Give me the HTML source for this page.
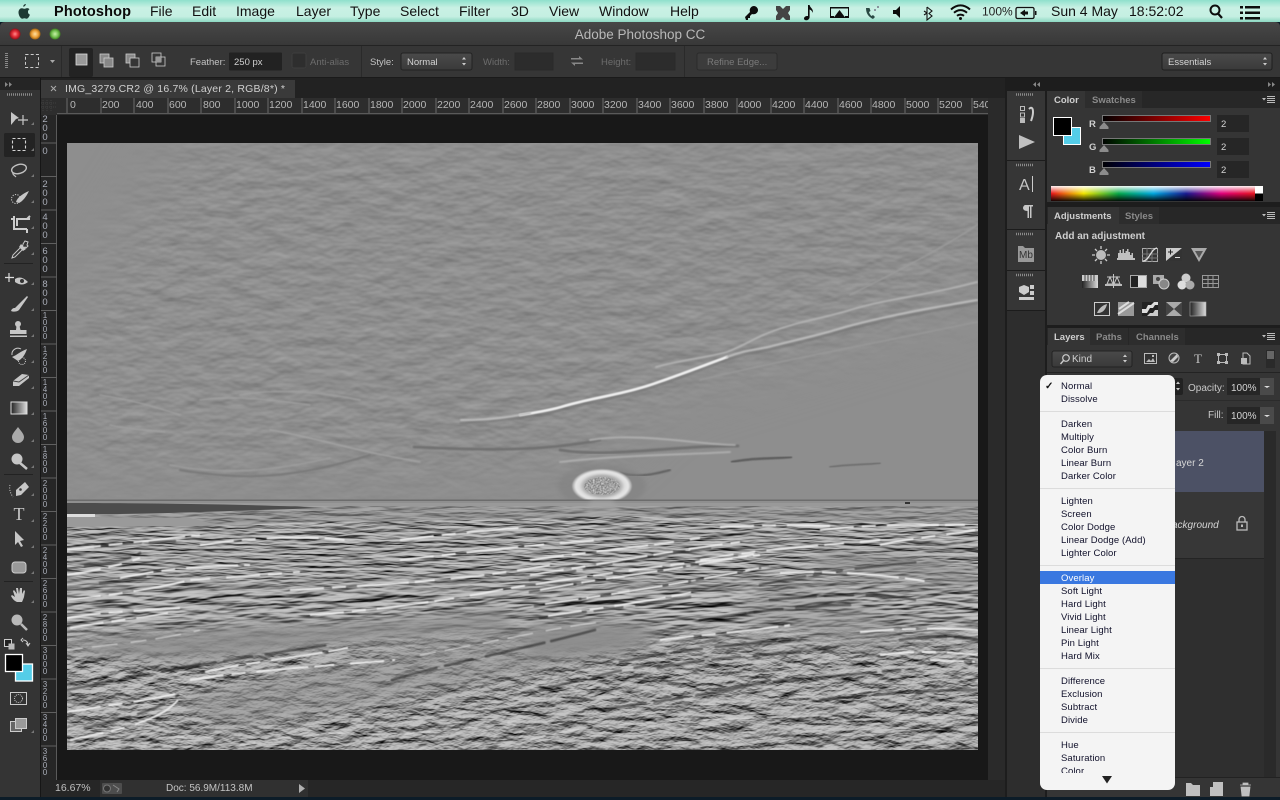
<!DOCTYPE html>
<html><head><meta charset="utf-8"><title>Adobe Photoshop CC</title>
<style>
html,body{margin:0;padding:0;width:1280px;height:800px;overflow:hidden;background:#0b1a24}
svg{display:block;position:absolute;left:0;top:0}
text{font-family:"Liberation Sans",sans-serif}
.m{font-size:14px;fill:#111}
.o{font-size:9.5px;fill:#c4c4c4}
.od{font-size:9.5px;fill:#6c6c6c}
.rt{font-size:10.5px;fill:#b6b6b6}
.rv{font-size:9.5px;fill:#a9adb8;text-anchor:middle}
.rs{font-size:8px}
.t{font-size:9.5px;font-weight:bold;fill:#cfcfcf}
.ti{font-size:9.5px;font-weight:bold;fill:#8a8a8a}
.i{font-size:9.5px;fill:#10102a;letter-spacing:.1px}
</style></head><body>
<svg width="1280" height="800" viewBox="0 0 1280 800" xmlns="http://www.w3.org/2000/svg">
<defs>
<linearGradient id="menu" x1="0" y1="0" x2="0" y2="1"><stop offset="0" stop-color="#8fe0cc"/><stop offset=".35" stop-color="#c9f1e4"/><stop offset=".75" stop-color="#c5efe2"/><stop offset="1" stop-color="#8cd8c2"/></linearGradient>
<linearGradient id="title" x1="0" y1="0" x2="0" y2="1"><stop offset="0" stop-color="#474747"/><stop offset="1" stop-color="#383838"/></linearGradient>
<linearGradient id="rs" x1="0" x2="1"><stop offset="0" stop-color="#020000"/><stop offset="1" stop-color="#ff0000"/></linearGradient>
<linearGradient id="gs" x1="0" x2="1"><stop offset="0" stop-color="#000200"/><stop offset="1" stop-color="#00ff00"/></linearGradient>
<linearGradient id="bs" x1="0" x2="1"><stop offset="0" stop-color="#000002"/><stop offset="1" stop-color="#0000ff"/></linearGradient>
<linearGradient id="hue" x1="0" x2="1"><stop offset="0" stop-color="#e8141c"/><stop offset=".16" stop-color="#f3e600"/><stop offset=".33" stop-color="#06a84a"/><stop offset=".5" stop-color="#00a8e0"/><stop offset=".66" stop-color="#1a1a90"/><stop offset=".83" stop-color="#e0007c"/><stop offset="1" stop-color="#e8141c"/></linearGradient>
<linearGradient id="shade" x1="0" y1="0" x2="0" y2="1"><stop offset="0" stop-color="#fff" stop-opacity=".95"/><stop offset=".5" stop-color="#fff" stop-opacity="0"/><stop offset=".5" stop-color="#000" stop-opacity="0"/><stop offset="1" stop-color="#000" stop-opacity=".9"/></linearGradient>
<linearGradient id="ggrad" x1="0" x2="1"><stop offset="0" stop-color="#222"/><stop offset="1" stop-color="#ddd"/></linearGradient>
<linearGradient id="btn" x1="0" y1="0" x2="0" y2="1"><stop offset="0" stop-color="#4a4a4a"/><stop offset="1" stop-color="#3a3a3a"/></linearGradient>
<radialGradient id="red"><stop offset="0" stop-color="#ff8a8a"/><stop offset=".5" stop-color="#e5303a"/><stop offset="1" stop-color="#8a1018"/></radialGradient>
<radialGradient id="yel"><stop offset="0" stop-color="#ffe0a0"/><stop offset=".6" stop-color="#eda13a"/><stop offset="1" stop-color="#9a6010"/></radialGradient>
<radialGradient id="grn"><stop offset="0" stop-color="#c8f0a8"/><stop offset=".6" stop-color="#74c052"/><stop offset="1" stop-color="#3a7a20"/></radialGradient>
<radialGradient id="sun"><stop offset="0" stop-color="#a6a6a6"/><stop offset=".6" stop-color="#acacac"/><stop offset=".76" stop-color="#dedede"/><stop offset=".88" stop-color="#e6e6e6"/><stop offset="1" stop-color="#9a9a9a"/></radialGradient>
<filter id="sky" x="0" y="0" width="1" height="1" color-interpolation-filters="sRGB"><feTurbulence type="fractalNoise" baseFrequency="0.035 0.07" numOctaves="3" seed="7"/><feDiffuseLighting surfaceScale="0.800" diffuseConstant="0.68" lighting-color="#fff"><feDistantLight azimuth="90" elevation="55"/></feDiffuseLighting></filter>
<filter id="spk" x="0" y="0" width="1" height="1" color-interpolation-filters="sRGB"><feTurbulence type="fractalNoise" baseFrequency="0.6" numOctaves="1" seed="4"/><feColorMatrix values="0 0 0 1.100 .05 0 0 0 1.100 .05 0 0 0 1.100 .05 0 0 0 0 1"/></filter>
<filter id="rockA" x="0" y="0" width="1" height="1" color-interpolation-filters="sRGB"><feTurbulence type="fractalNoise" baseFrequency="0.03 0.2" numOctaves="3" seed="11"/><feDiffuseLighting surfaceScale="2" diffuseConstant="0.72" lighting-color="#fff"><feDistantLight azimuth="90" elevation="55"/></feDiffuseLighting><feComponentTransfer><feFuncR type="linear" slope="1.3" intercept="-.17"/><feFuncG type="linear" slope="1.3" intercept="-.17"/><feFuncB type="linear" slope="1.3" intercept="-.17"/></feComponentTransfer></filter>
<filter id="rockB" x="0" y="0" width="1" height="1" color-interpolation-filters="sRGB"><feTurbulence type="fractalNoise" baseFrequency="0.025 0.13" numOctaves="3" seed="23"/><feDiffuseLighting surfaceScale="3" diffuseConstant="0.72" lighting-color="#fff"><feDistantLight azimuth="90" elevation="55"/></feDiffuseLighting><feComponentTransfer><feFuncR type="linear" slope="1.3" intercept="-.16"/><feFuncG type="linear" slope="1.3" intercept="-.16"/><feFuncB type="linear" slope="1.3" intercept="-.16"/></feComponentTransfer></filter>
<filter id="rockC" x="0" y="0" width="1" height="1" color-interpolation-filters="sRGB"><feTurbulence type="fractalNoise" baseFrequency="0.04 0.1" numOctaves="4" seed="31"/><feDiffuseLighting surfaceScale="3" diffuseConstant="0.72" lighting-color="#fff"><feDistantLight azimuth="80" elevation="55"/></feDiffuseLighting><feComponentTransfer><feFuncR type="linear" slope="1.3" intercept="-.16"/><feFuncG type="linear" slope="1.3" intercept="-.16"/><feFuncB type="linear" slope="1.3" intercept="-.16"/></feComponentTransfer></filter>
<filter id="b06"><feGaussianBlur stdDeviation=".5"/></filter>
<filter id="b1"><feGaussianBlur stdDeviation=".8"/></filter>
<filter id="b2"><feGaussianBlur stdDeviation="2.200"/></filter>
<filter id="b3" x="-10%" y="-30%" width="120%" height="160%"><feGaussianBlur stdDeviation="7"/></filter>
<filter id="b30" x="-20%" y="-20%" width="140%" height="140%"><feGaussianBlur stdDeviation="30"/></filter>
<mask id="skymask" maskUnits="userSpaceOnUse" x="67" y="143" width="911" height="360"><polygon points="190,130 990,130 990,295 660,395 600,455 400,480 60,470 60,330" fill="#fff" filter="url(#b30)"/></mask>
<linearGradient id="fA" x1="0" y1="0" x2="0" y2="1"><stop offset="0" stop-color="#fff"/><stop offset=".75" stop-color="#fff"/><stop offset="1" stop-color="#000"/></linearGradient>
<linearGradient id="fC" x1="0" y1="0" x2="0" y2="1"><stop offset="0" stop-color="#000"/><stop offset=".3" stop-color="#fff"/></linearGradient>
<mask id="mA" maskUnits="userSpaceOnUse" x="67" y="515" width="911" height="80"><rect x="67" y="515" width="911" height="80" fill="url(#fA)"/></mask>
<mask id="mC" maskUnits="userSpaceOnUse" x="67" y="620" width="911" height="130"><rect x="67" y="620" width="911" height="130" fill="url(#fC)"/></mask>
<clipPath id="photo"><rect x="67" y="143" width="911" height="607"/></clipPath>
<clipPath id="sunc"><ellipse cx="602" cy="486" rx="18" ry="9"/></clipPath>
<clipPath id="rocktop"><path d="M67 527 L200 526 L320 522 L470 520 L620 516 L760 520 L860 522 L978 524 L978 750 L67 750Z"/></clipPath>
<clipPath id="menuclip"><rect x="1040" y="375" width="135" height="398"/></clipPath>
</defs>

<!-- desktop & menubar -->
<rect width="1280" height="800" fill="#0c1c28"/>
<rect width="1280" height="22" fill="url(#menu)"/>
<path d="M26 4c-.3 1.500-1.400 2.600-2.700 2.700-.2-1.400 1-2.600 2.700-2.700zM29.500 9.300c-1.300.8-1.600 2-1.500 3 .1 1.200.9 2 1.900 2.400-.7 2-2 4-3.300 4-.8 0-1.300-.5-2.200-.5s-1.500.5-2.200.5c-1.700 0-3.700-3.500-3.700-6.300 0-2.600 1.600-4.200 3.300-4.200 1 0 1.900.6 2.600.6s1.700-.7 2.800-.7c.9 0 1.600.4 2.300 1.200z" fill="#1e3a34"/>
<text x="54" y="16" style="font-size:14.500px;font-weight:bold;fill:#0a0a0a" textLength="77">Photoshop</text>
<text class="m" x="150" y="16">File</text><text class="m" x="192" y="16">Edit</text><text class="m" x="236" y="16">Image</text><text class="m" x="296" y="16">Layer</text><text class="m" x="350" y="16">Type</text><text class="m" x="400" y="16">Select</text><text class="m" x="459" y="16">Filter</text><text class="m" x="511" y="16">3D</text><text class="m" x="549" y="16">View</text><text class="m" x="599" y="16">Window</text><text class="m" x="670" y="16">Help</text>
<g fill="#0c0c0c">
<path d="M746 20l-1-3 5-5c-1-3 1-6 4-6 2 0 4 2 4 4 0 3-3 5-6 4l-2 2v2h-2v2z"/>
<path d="M776 6h4l3 3 3-3h4v4l-2 3 2 3v4h-4l-3-3-3 3h-4v-4l2-3-2-3z" fill="#444"/>
<path d="M808 5h1.600c.5 3 4.400 4 3 8-.3-2-1.700-3-3-3.500V17c0 2-1.700 3.300-3.400 3.300-1.500 0-2.200-1-2.200-1.800 0-1.500 2-2.800 4-2.400z"/>
<path d="M830 7h19v11h-4v-2h3V8.500h-17V16h3v2h-4z"/><path d="M839.500 10l6 8h-12z"/>
<path d="M866 8c0 6 3 9 7 11l2-2-2-2-1.500 1c-1.200-1-2-2.300-2.500-4l1.500-1-1-3z" fill="#2a4a44"/><circle cx="875" cy="10" r="1" fill="#778"/><circle cx="878" cy="7" r="1" fill="#778"/>
<path d="M893 10h3l4-4v12l-4-4h-3z"/>
<path d="M927 7l5 4-3 2.500 3 2.500-5 4V13l-3 2m3-8v6l-3-2" fill="none" stroke="#111" stroke-width="1.100"/>
</g>
<g fill="none" stroke="#0c0c0c" stroke-width="2"><path d="M951 9.500c6-5.500 13-5.500 19 0"/><path d="M954 12.700c4-3.500 9-3.500 13 0"/><path d="M957 15.800c2-1.600 5-1.600 7 0"/></g><circle cx="960.500" cy="18.500" r="1.500" fill="#0c0c0c"/>
<text x="982" y="15.500" style="font-size:12px;fill:#222">100%</text>
<rect x="1016" y="7.500" width="18" height="11" rx="1.500" fill="none" stroke="#111" stroke-width="1.300"/><rect x="1035" y="11" width="1.500" height="4" fill="#111"/><path d="M1020 13l5-3.500v2h3v3h-3v2z" fill="#111"/>
<text class="m" x="1051" y="16">Sun 4 May</text><text class="m" x="1129" y="16">18:52:02</text>
<circle cx="1215" cy="10" r="4.500" fill="none" stroke="#0c0c0c" stroke-width="2"/><path d="M1218 13.500l4 4.500" stroke="#0c0c0c" stroke-width="2.200"/>
<g fill="#0c0c0c"><rect x="1240" y="6" width="3" height="2.500"/><rect x="1245" y="6" width="15" height="2.500"/><rect x="1240" y="11.500" width="3" height="2.500"/><rect x="1245" y="11.500" width="15" height="2.500"/><rect x="1240" y="17" width="3" height="2.500"/><rect x="1245" y="17" width="15" height="2.500"/></g>

<!-- window chrome -->
<path d="M0 27q0-5 5-5h1270q5 0 5 5v770H0z" fill="#1c1c1c"/>
<path d="M0 27q0-5 5-5h1270q5 0 5 5v18H0z" fill="url(#title)"/>
<rect y="45" width="1280" height="1" fill="#232323"/>
<circle cx="15" cy="34" r="5.500" fill="url(#red)"/><circle cx="35" cy="34" r="5.500" fill="url(#yel)"/><circle cx="55" cy="34" r="5.500" fill="url(#grn)"/>
<text x="640" y="39" text-anchor="middle" style="font-size:13.500px;fill:#b8b8b8">Adobe Photoshop CC</text>

<!-- options bar -->
<rect y="46" width="1280" height="31" fill="#363636"/><rect y="77" width="1280" height="1" fill="#1a1a1a"/>
<g fill="#8a8a8a"><rect x="5" y="53" width="3" height="1"/><rect x="5" y="55" width="3" height="1"/><rect x="5" y="57" width="3" height="1"/><rect x="5" y="59" width="3" height="1"/><rect x="5" y="61" width="3" height="1"/><rect x="5" y="63" width="3" height="1"/><rect x="5" y="65" width="3" height="1"/><rect x="5" y="67" width="3" height="1"/></g>
<rect x="25.500" y="54.500" width="13" height="13" fill="none" stroke="#ccc" stroke-dasharray="3 2.200"/>
<path d="M50 60h5l-2.500 3z" fill="#aaa"/>
<rect x="61" y="46" width="1" height="31" fill="#2a2a2a"/>
<rect x="69" y="48" width="24" height="29" rx="2" fill="#232323"/>
<rect x="76" y="54" width="11" height="11" fill="#999" stroke="#ddd" stroke-width=".8"/>
<rect x="100" y="54" width="9" height="9" fill="#888" stroke="#ccc" stroke-width=".8"/><rect x="104" y="58" width="9" height="9" fill="#888" stroke="#ccc" stroke-width=".8"/>
<rect x="126" y="54" width="9" height="9" fill="#888" stroke="#ccc" stroke-width=".8"/><rect x="130" y="58" width="9" height="9" fill="#363636" stroke="#ccc" stroke-width=".8"/>
<rect x="152" y="53" width="9" height="9" fill="none" stroke="#ccc" stroke-width=".8"/><rect x="156" y="57" width="9" height="9" fill="none" stroke="#ccc" stroke-width=".8"/><rect x="156" y="57" width="5" height="5" fill="#999"/>
<text class="o" x="190" y="65">Feather:</text>
<rect x="229" y="52.500" width="53" height="18" rx="1" fill="#222"/>
<text class="o" x="234" y="65" style="fill:#d0d0d0">250 px</text>
<rect x="292" y="53" width="14" height="15" rx="2" fill="#2e2e2e" stroke="#3d3d3d"/>
<text class="od" x="310" y="65">Anti-alias</text>
<rect x="361" y="46" width="1" height="31" fill="#2a2a2a"/>
<text class="o" x="370" y="65">Style:</text>
<rect x="401" y="53" width="71" height="17" rx="2" fill="url(#btn)" stroke="#222"/>
<text class="o" x="407" y="65" style="fill:#d4d4d4">Normal</text>
<path d="M462 59.500l2-2.500 2 2.500zM462 63l2 2.500 2-2.500z" fill="#ccc"/>
<text class="od" x="483" y="65">Width:</text>
<rect x="515" y="53" width="38" height="17" fill="#2c2c2c" stroke="#2a2a2a"/>
<path d="M571 58h8v-2l4 3.500-4 0h-8zM583 64h-8v2l-4-3.500 4 0h8z" fill="#888"/>
<text class="od" x="601" y="65">Height:</text>
<rect x="636" y="53" width="39" height="17" fill="#2c2c2c" stroke="#2a2a2a"/>
<rect x="684" y="46" width="1" height="31" fill="#2a2a2a"/>
<rect x="697" y="53" width="80" height="17" rx="2" fill="#3c3c3c" stroke="#2b2b2b"/>
<text class="od" x="707" y="65" style="fill:#7a7a7a">Refine Edge...</text>
<rect x="1162" y="53" width="110" height="17" rx="2" fill="url(#btn)" stroke="#1e1e1e"/>
<text class="o" x="1168" y="65" style="fill:#d4d4d4">Essentials</text>
<path d="M1263 59.500l2-2.500 2 2.500zM1263 63l2 2.500 2-2.500z" fill="#ccc"/>

<!-- left tools -->
<rect y="78" width="40" height="722" fill="#343434"/>
<rect y="78" width="40" height="12" fill="#252525"/>
<rect x="40" y="78" width="1" height="719" fill="#161616"/>
<path d="M5 82l3 2.500-3 2.500zM9 82l3 2.500-3 2.500z" fill="#888"/>
<path d="M7 94.500h26" stroke="#8a8a8a" stroke-width="2.500" stroke-dasharray="1 1"/>
<g fill="#c6c6c6">
<path d="M11 112v13l5-6 3-1z"/><path d="M23 115v10M18 120h10" stroke="#c6c6c6" stroke-width="1.200"/>
<rect x="4" y="133" width="31" height="24" rx="1.500" fill="#232323"/>
<rect x="12.500" y="138.500" width="13" height="12" fill="none" stroke="#d4d4d4" stroke-dasharray="3 2" stroke-width="1.100"/>
<ellipse cx="19" cy="169" rx="7.500" ry="4.500" fill="none" stroke="#c0c0c0" stroke-width="1.400" transform="rotate(-15 19 169)"/><path d="M13 172c-1 2 1 3 3 5" fill="none" stroke="#c0c0c0" stroke-width="1.200"/>
<circle cx="16" cy="199" r="4.500" fill="none" stroke="#ccc" stroke-dasharray="1.200 1.300"/><path d="M16 202c1-4 6-8 13-11-3 6-6 10-10 12z"/>
<path d="M14 216v13h13M14 219H11M17 226V219h13M27 229v4M30 216l-3 3" fill="none" stroke="#ccc" stroke-width="2"/>
<path d="M23 244l2-3 3 1-1 3 1 1-2 2-1-1-10 10-3 1 1-3 10-10z" fill="none" stroke="#c8c8c8"/><path d="M21 244l5 5-3 2-4-4z"/>
<path d="M9 273v9M5 277.500h9" stroke="#ddd" stroke-width="1.200"/><path d="M15 279q6-4 13 3-6 5-13 0z"/><circle cx="22" cy="281" r="2" fill="#333"/>
<path d="M11 311c1-3 3-3 4-3l12-12 1 1-9 13c-2 2-6 2-8 1z"/>
<circle cx="18" cy="324" r="3"/><path d="M16.500 326h3l1 4h6v4H10v-4h6z"/><rect x="10" y="335.500" width="17" height="1.500"/>
<path d="M12 357c5-2 9-6 15-8-2 6-5 10-9 12z"/><path d="M12 355a6 6 0 0 1 9-6" fill="none" stroke="#ccc"/><circle cx="22" cy="361" r="3.500" fill="none" stroke="#ccc" stroke-dasharray="1 1"/>
<path d="M13 381l9-7 7 1 0 3-10 8H13z"/><path d="M13 381l6 1 10-7" stroke="#444" fill="none"/>
<rect x="11" y="402" width="16" height="12" fill="url(#ggrad)" stroke="#ddd"/>
<path d="M18 427c3 4 6 7 6 10a6 6 0 0 1-12 0c0-3 3-6 6-10z" fill="#aaa"/>
<circle cx="17" cy="459" r="5.500"/><path d="M20 463l7 6" stroke="#c6c6c6" stroke-width="2.500"/>
<path d="M16 490l9-8 4 5-8 8-5 1z"/><circle cx="20.500" cy="489.500" r="1.300" fill="#333"/><path d="M10 485c-1 3 0 8 3 12" fill="none" stroke="#ccc" stroke-dasharray="1 1.500"/>
</g>
<text x="19" y="520" text-anchor="middle" style="font-family:'Liberation Serif',serif;font-size:18px;fill:#c6c6c6">T</text>
<path d="M15 531v14l3-3 3 5 2-1-3-5 4-1z" fill="#c6c6c6"/>
<rect x="12" y="562" width="14" height="11" rx="3" fill="#999" stroke="#ccc"/>
<path d="M17 602c-3-1-5-4-6-6l1-1 3 2-2-6 1-1 3 4-1-6 2 0 1 6 1-6 2 0 0 6 2-4 1 1-1 6c-1 3-2 5-2 5z" fill="#c6c6c6"/>
<circle cx="17" cy="620" r="5.500" fill="#b8b8b8"/><path d="M21 624l6 6" stroke="#b8b8b8" stroke-width="2.500"/>
<g fill="#777"><path d="M34 125l-3 0 3-3zM34 151l-3 0 3-3zM34 177l-3 0 3-3zM34 203l-3 0 3-3zM34 229l-3 0 3-3zM34 255l-3 0 3-3zM34 285l-3 0 3-3zM34 311l-3 0 3-3zM34 337l-3 0 3-3zM34 363l-3 0 3-3zM34 389l-3 0 3-3zM34 415l-3 0 3-3zM34 442l-3 0 3-3zM34 468l-3 0 3-3zM34 496l-3 0 3-3zM34 522l-3 0 3-3zM34 548l-3 0 3-3zM34 574l-3 0 3-3zM34 603l-3 0 3-3zM34 733l-3 0 3-3z"/></g>
<g fill="#222"><rect x="4" y="263" width="29" height="1"/><rect x="4" y="474" width="29" height="1"/><rect x="4" y="581" width="29" height="1"/></g>
<rect x="4.500" y="639.500" width="7" height="7" fill="#222" stroke="#ccc"/><rect x="8.500" y="643.500" width="6" height="6" fill="#bbb"/>
<path d="M23 640c3 0 5 2 5 5M26 643l2 3 2-3M23 638l-2 2 2 2" fill="none" stroke="#ccc" stroke-width="1"/>
<rect x="15.500" y="664" width="17" height="17" fill="#54cde8" stroke="#fff" stroke-width="1.300"/>
<rect x="5.500" y="654.500" width="17" height="17" fill="#000" stroke="#fff" stroke-width="1.300"/>
<rect x="10.500" y="692.500" width="16" height="12" fill="#333" stroke="#ccc"/><circle cx="18.500" cy="698.500" r="4" fill="none" stroke="#ccc" stroke-dasharray="1 1"/>
<rect x="10.500" y="721.500" width="11" height="10" fill="#666" stroke="#ccc"/><rect x="15.500" y="718.500" width="11" height="10" fill="#999" stroke="#ccc"/>

<!-- doc tab row -->
<rect x="41" y="78" width="964" height="20" fill="#222"/>
<rect x="41" y="80" width="254" height="18" fill="#3a3a3a"/>
<path d="M51 86l5 5M56 86l-5 5" stroke="#aaa"/>
<text x="65" y="92" style="font-size:10.500px;fill:#d0d0d0" textLength="220">IMG_3279.CR2 @ 16.7% (Layer 2, RGB/8*) *</text>

<!-- canvas bg -->
<rect x="41" y="98" width="964" height="682" fill="#181818"/>
<!-- rulers -->
<rect x="41" y="98" width="947" height="17" fill="#2d2d2d"/>
<rect x="41" y="115" width="16" height="665" fill="#262626"/>
<rect x="57" y="113" width="931" height="1" fill="#5a5a5a"/>
<rect x="56" y="115" width="1" height="665" fill="#5a5a5a"/>
<path d="M43 100v12M47 100v12M51 100v12M41 103h15M41 107h15" stroke="#3f3f3f" stroke-dasharray="1 1"/>
<path d="M67 98v15M101 98v15M134 98v15M168 98v15M201 98v15M235 98v15M268 98v15M302 98v15M335 98v15M369 98v15M402 98v15M436 98v15M469 98v15M503 98v15M536 98v15M570 98v15M603 98v15M637 98v15M670 98v15M704 98v15M737 98v15M771 98v15M804 98v15M838 98v15M871 98v15M905 98v15M938 98v15M972 98v15" stroke="#6a6a6a"/>
<text class="rt" x="70" y="108">0</text><text class="rt" x="102" y="108">200</text><text class="rt" x="136" y="108">400</text><text class="rt" x="169" y="108">600</text><text class="rt" x="203" y="108">800</text><text class="rt" x="236" y="108">1000</text><text class="rt" x="269" y="108">1200</text><text class="rt" x="303" y="108">1400</text><text class="rt" x="336" y="108">1600</text><text class="rt" x="370" y="108">1800</text><text class="rt" x="403" y="108">2000</text><text class="rt" x="437" y="108">2200</text><text class="rt" x="470" y="108">2400</text><text class="rt" x="504" y="108">2600</text><text class="rt" x="537" y="108">2800</text><text class="rt" x="571" y="108">3000</text><text class="rt" x="604" y="108">3200</text><text class="rt" x="638" y="108">3400</text><text class="rt" x="671" y="108">3600</text><text class="rt" x="705" y="108">3800</text><text class="rt" x="738" y="108">4000</text><text class="rt" x="772" y="108">4200</text><text class="rt" x="805" y="108">4400</text><text class="rt" x="839" y="108">4600</text><text class="rt" x="872" y="108">4800</text><text class="rt" x="906" y="108">5000</text><text class="rt" x="939" y="108">5200</text><text class="rt" x="973" y="108">540</text>
<path d="M41 143h16M41 176.500h16M41 210h16M41 243.500h16M41 277h16M41 310.500h16M41 344h16M41 377.500h16M41 411h16M41 444.500h16M41 478h16M41 511.500h16M41 545h16M41 578.500h16M41 612h16M41 645.500h16M41 679h16M41 712.500h16M41 746h16" stroke="#606060"/>
<g>
<text class="rv" x="45" y="122">2</text><text class="rv" x="45" y="131">0</text><text class="rv" x="45" y="140">0</text>
<text class="rv" x="45" y="154">0</text>
<text class="rv" x="45" y="187">2</text><text class="rv" x="45" y="196">0</text><text class="rv" x="45" y="205">0</text>
<text class="rv" x="45" y="220">4</text><text class="rv" x="45" y="229">0</text><text class="rv" x="45" y="238">0</text>
<text class="rv" x="45" y="254">6</text><text class="rv" x="45" y="263">0</text><text class="rv" x="45" y="272">0</text>
<text class="rv" x="45" y="287">8</text><text class="rv" x="45" y="296">0</text><text class="rv" x="45" y="305">0</text>
<text class="rv rs" x="45" y="318">1</text><text class="rv rs" x="45" y="325">0</text><text class="rv rs" x="45" y="332">0</text><text class="rv rs" x="45" y="339">0</text>
<text class="rv rs" x="45" y="352">1</text><text class="rv rs" x="45" y="359">2</text><text class="rv rs" x="45" y="366">0</text><text class="rv rs" x="45" y="373">0</text>
<text class="rv rs" x="45" y="385">1</text><text class="rv rs" x="45" y="392">4</text><text class="rv rs" x="45" y="399">0</text><text class="rv rs" x="45" y="406">0</text>
<text class="rv rs" x="45" y="419">1</text><text class="rv rs" x="45" y="426">6</text><text class="rv rs" x="45" y="433">0</text><text class="rv rs" x="45" y="440">0</text>
<text class="rv rs" x="45" y="452">1</text><text class="rv rs" x="45" y="459">8</text><text class="rv rs" x="45" y="466">0</text><text class="rv rs" x="45" y="473">0</text>
<text class="rv rs" x="45" y="486">2</text><text class="rv rs" x="45" y="493">0</text><text class="rv rs" x="45" y="500">0</text><text class="rv rs" x="45" y="507">0</text>
<text class="rv rs" x="45" y="519">2</text><text class="rv rs" x="45" y="526">2</text><text class="rv rs" x="45" y="533">0</text><text class="rv rs" x="45" y="540">0</text>
<text class="rv rs" x="45" y="553">2</text><text class="rv rs" x="45" y="560">4</text><text class="rv rs" x="45" y="567">0</text><text class="rv rs" x="45" y="574">0</text>
<text class="rv rs" x="45" y="586">2</text><text class="rv rs" x="45" y="593">6</text><text class="rv rs" x="45" y="600">0</text><text class="rv rs" x="45" y="607">0</text>
<text class="rv rs" x="45" y="620">2</text><text class="rv rs" x="45" y="627">8</text><text class="rv rs" x="45" y="634">0</text><text class="rv rs" x="45" y="641">0</text>
<text class="rv rs" x="45" y="653">3</text><text class="rv rs" x="45" y="660">0</text><text class="rv rs" x="45" y="667">0</text><text class="rv rs" x="45" y="674">0</text>
<text class="rv rs" x="45" y="687">3</text><text class="rv rs" x="45" y="694">2</text><text class="rv rs" x="45" y="701">0</text><text class="rv rs" x="45" y="708">0</text>
<text class="rv rs" x="45" y="720">3</text><text class="rv rs" x="45" y="727">4</text><text class="rv rs" x="45" y="734">0</text><text class="rv rs" x="45" y="741">0</text>
<text class="rv rs" x="45" y="754">3</text><text class="rv rs" x="45" y="761">6</text><text class="rv rs" x="45" y="768">0</text><text class="rv rs" x="45" y="775">0</text>
</g>
<rect x="988" y="98" width="17" height="682" fill="#2a2a2a"/>

<!-- photo -->
<g clip-path="url(#photo)">
<rect x="67" y="143" width="911" height="607" fill="#8e8e8e"/>
<g mask="url(#skymask)"><rect x="67" y="143" width="911" height="360" filter="url(#sky)"/></g>
<g fill="none" stroke-linecap="round">
<path d="M461 420C500 418 530 415 561 407C590 398 620 395 650 385C680 375 705 365 727 357C745 350 755 350 768 347C795 340 820 335 845 327C890 315 930 308 977 300" stroke="#666" stroke-opacity=".4" stroke-width="3" transform="translate(0 3)" filter="url(#b1)"/>
<path d="M520 415C540 412 550 410 561 407C590 398 620 395 650 385C680 375 705 365 727 357" stroke="#eee" stroke-width="2.600" filter="url(#b06)"/>
<path d="M461 420C490 420 510 417 530 413M727 357C745 350 755 350 768 347C795 340 820 335 845 327C890 315 930 308 977 300" stroke="#bebebe" stroke-width="2" filter="url(#b1)"/>
<path d="M656 367C680 360 705 358 727 352C745 345 755 338 768 333C795 322 825 318 850 310C890 298 930 295 977 282" stroke="#b4b4b4" stroke-width="1.800" filter="url(#b1)"/>
<path d="M700 380C760 365 840 350 977 322" stroke="#9a9a9a" stroke-width="1.400" filter="url(#b1)"/>
<path d="M850 295C890 275 940 250 977 225" stroke="#9c9c9c" stroke-width="1.400" filter="url(#b1)"/>
<path d="M270 430C310 436 350 450 420 462" stroke="#a4a4a4" stroke-width="1.500" filter="url(#b1)"/>
<path d="M180 470C240 480 290 480 370 455" stroke="#787878" stroke-width="2" filter="url(#b1)"/>
<path d="M170 465C220 475 270 472 330 458" stroke="#a0a0a0" stroke-width="1.200" filter="url(#b1)"/>
<path d="M100 395C130 400 150 405 180 415M200 400C240 395 270 400 310 405M110 425C130 430 150 430 165 432M240 395C280 388 320 392 360 400" stroke="#a2a2a2" stroke-width="1.300" filter="url(#b1)"/>
<path d="M414 447C480 450 540 452 600 440M560 450C610 458 680 445 738 446" stroke="#707070" stroke-width="2.800" filter="url(#b1)"/>
<path d="M560 462C620 455 680 455 730 452M590 440C640 432 700 445 735 445" stroke="#b0b0b0" stroke-width="1.800" filter="url(#b1)"/>
<path d="M732 462C750 458 770 459 791 457" stroke="#5e5e5e" stroke-width="2.500" filter="url(#b06)"/>
<path d="M830 467C850 464 865 465 880 463" stroke="#6e6e6e" stroke-width="1.800" filter="url(#b06)"/>
<path d="M620 473C640 478 655 474 670 470" stroke="#5e5e5e" stroke-width="2" filter="url(#b1)"/>
</g>
<!-- sun -->
<ellipse cx="602" cy="486" rx="44" ry="22" fill="#7e7e7e" opacity=".45" filter="url(#b2)"/>
<ellipse cx="602" cy="486" rx="30" ry="17" fill="url(#sun)" filter="url(#b06)"/>
<g clip-path="url(#sunc)"><rect x="584" y="476" width="36" height="20" filter="url(#spk)" opacity=".55"/></g>
<!-- sea -->
<rect x="67" y="500" width="911" height="30" fill="#8f8f8f"/>
<rect x="67" y="499.500" width="911" height="1.500" fill="#6c6c6c"/>
<rect x="67" y="503" width="911" height="3" fill="#a0a0a0" opacity=".6"/>
<rect x="67" y="506" width="911" height="24" filter="url(#rockA)" opacity=".45"/>
<path d="M584 510l8-10h20l8 10-12 14h-12z" fill="#a8a8a8" opacity=".6" filter="url(#b2)"/>
<path d="M67 503C130 503 260 504 325 508L260 510C200 512 130 515 67 514z" fill="#4c4c4c"/>
<rect x="67" y="514" width="28" height="3" fill="#ddd"/>
<path d="M67 517L190 518L230 528L67 528z" fill="#9a9a9a"/>
<rect x="905" y="502" width="5" height="2" fill="#333"/>
<!-- rocks -->
<g clip-path="url(#rocktop)">
<rect x="30" y="490" width="990" height="290" filter="url(#rockB)" transform="rotate(-3 520 600)"/>
<g mask="url(#mA)"><rect x="67" y="515" width="911" height="80" filter="url(#rockA)"/></g>
<g mask="url(#mC)"><rect x="67" y="620" width="911" height="130" filter="url(#rockC)"/></g>
<g fill="#8e8e8e" filter="url(#b3)">
<path d="M67 640C150 632 260 622 340 622C420 618 470 610 500 608L520 630C440 635 360 640 270 655C200 665 130 662 67 650z" opacity=".85"/>
<path d="M175 700C260 670 400 650 520 632L620 628L660 645C600 655 540 668 460 690C380 705 300 720 220 728z" opacity=".55"/>
<path d="M525 625C570 618 620 620 665 628L620 655L530 660z" opacity=".9"/>
<path d="M818 555C860 553 930 560 978 572L978 582C930 575 860 575 815 570z" opacity=".8"/>
<path d="M740 600C790 590 850 595 900 620L890 650C840 640 790 625 740 620z" opacity=".45"/>
</g>
<g fill="none" stroke="#222" stroke-opacity=".55" stroke-width="2.600" stroke-linecap="round" filter="url(#b06)" stroke-dasharray="46 9 28 14 60 7">
<path d="M95 547C130 543 150 542 175 541M85 566C110 563 130 560 140 553M100 583C115 582 130 580 150 575"/>
<path d="M530 580C590 568 650 555 710 548M530 592C600 580 670 570 740 556M535 606C600 596 680 584 760 568M540 618C600 610 650 604 690 597"/>
<path d="M760 585C820 572 880 565 920 562M770 600C820 595 880 592 915 600M700 620C760 610 820 605 850 605M900 640C930 636 960 636 978 640"/>
<path d="M170 670C230 660 290 650 330 645"/>
<path d="M392 680C440 665 520 650 595 630"/>
<path d="M67 690C120 680 170 670 200 664M85 728C120 720 160 710 178 695M620 662C680 650 730 645 790 640"/>
<path d="M658 668C700 660 750 655 800 652M720 690C770 680 850 675 900 670M600 710C660 700 720 695 770 680M820 700C870 695 920 690 978 690"/>
<path d="M540 690C580 680 620 670 650 665"/>
</g>
<g fill="none" stroke="#f0f0f0" stroke-width="2" stroke-linecap="butt" stroke-opacity=".92" filter="url(#b06)" stroke-dasharray="34 8 14 11 52 6 20 16">
<path d="M67 618C100 612 150 610 180 608M70 628C100 622 130 620 168 613M67 600C110 595 150 590 190 580C220 578 260 575 300 572"/>
<path d="M120 578C160 570 190 566 250 565M67 575C100 570 120 565 140 558M67 550C110 545 150 540 200 535M200 545C250 538 300 535 345 540"/>
<path d="M310 615C380 610 450 600 500 590C560 580 660 565 760 555M290 590C380 585 470 580 550 565M400 560C450 555 520 545 600 540"/>
<path d="M530 560C590 552 650 546 700 538M530 575C600 565 660 552 740 542M540 590C600 578 680 570 760 553M545 604C610 595 690 582 770 566M548 616C620 605 670 598 700 590"/>
<path d="M700 560C750 550 830 545 880 540M780 573C830 570 890 575 930 582M880 545C910 538 950 535 975 530M820 530C870 524 930 525 975 525"/>
<path d="M190 680C250 670 340 665 395 660M205 672C260 660 320 655 360 645M67 712C110 705 150 700 175 694M70 740C110 732 160 722 178 700"/>
<path d="M660 640C700 635 760 630 790 625M860 632C900 628 950 628 978 630M880 655C920 650 950 652 978 655M930 660L975 662"/>
<path d="M400 540C440 535 490 530 520 528M720 527C760 525 790 525 830 526"/>
</g>
<g fill="none" stroke="#dcdcdc" stroke-width="1.400" stroke-opacity=".75" filter="url(#b06)" stroke-dasharray="16 9 26 13">
<path d="M67 650C110 645 160 640 200 630M420 655C480 645 540 630 600 622M640 730C700 715 760 720 820 715M700 705C760 700 820 695 880 690M830 722C880 716 930 720 978 718"/>
<path d="M530 740C580 725 620 725 680 720M380 738C420 730 480 730 520 720M240 745C300 735 340 730 380 735M70 745C120 740 170 735 220 738"/>
</g>
</g>
</g>

<!-- status bar -->
<rect x="41" y="780" width="964" height="17" fill="#262626"/>
<rect x="100" y="780" width="208" height="17" fill="#303030"/>
<text x="55" y="791" style="font-size:10.500px;fill:#c0c0c0">16.67%</text>
<rect x="102" y="783" width="20" height="11" rx="1" fill="#4d4d4d"/><circle cx="107" cy="788.500" r="3.500" fill="#333" stroke="#777"/><path d="M113 785l6 4-2 3" fill="none" stroke="#888"/>
<text x="166" y="791" style="font-size:10px;fill:#c4c4c4">Doc: 56.9M/113.8M</text>
<path d="M299 784l6 4.500-6 4.500z" fill="#b0b0b0"/>
<rect x="0" y="797" width="1280" height="3" fill="#0c1c28"/>

<!-- right side columns -->
<rect x="1005" y="78" width="275" height="719" fill="#1d1d1d"/>
<rect x="1007" y="91" width="38" height="706" fill="#2d2d2d"/>
<rect x="1007" y="91" width="38" height="70" fill="#363636"/><rect x="1007" y="161" width="38" height="68" fill="#363636"/><rect x="1007" y="230" width="38" height="40" fill="#363636"/><rect x="1007" y="271" width="38" height="40" fill="#363636"/>
<path d="M1016 94.500h17M1016 165h17M1016 234h17M1016 275h17" stroke="#8a8a8a" stroke-width="2.500" stroke-dasharray="1 1"/>
<rect x="1007" y="160" width="38" height="1" fill="#1c1c1c"/><rect x="1007" y="229" width="38" height="1" fill="#1c1c1c"/><rect x="1007" y="270" width="38" height="1" fill="#1c1c1c"/><rect x="1007" y="310" width="38" height="1" fill="#1c1c1c"/>
<path d="M1040 82l-3 2.500 3 2.500zM1036 82l-3 2.500 3 2.500z" fill="#888"/><path d="M1268 82l3 2.500-3 2.500zM1272 82l3 2.500-3 2.500z" fill="#888"/>
<g stroke="#bbb" fill="none"><rect x="1020.500" y="106.500" width="4" height="4"/><rect x="1020.500" y="113" width="4" height="4"/></g><rect x="1020" y="118" width="5" height="5" fill="#bbb"/><path d="M1029 109c3-3 4 0 4 3 0 4-1 6-2 9" fill="none" stroke="#ccc" stroke-width="2"/>
<path d="M1019 135l16 7-16 7z" fill="#c0c0c0"/>
<text x="1019" y="190" style="font-size:16px;fill:#c6c6c6">A</text><rect x="1032" y="176" width="1" height="16" fill="#ccc"/>
<path d="M1025 205h8v1.500h-1.500V218h-1.500v-11.500h-1V218h-1.500v-7c-3 0-4.500-1.500-4.500-3s1.500-3 2-3z" fill="#c6c6c6"/>
<path d="M1018 246h5l2 2h9v14h-16z" fill="#999"/><text x="1026" y="258" text-anchor="middle" style="font-size:10px;fill:#333">Mb</text>
<path d="M1024 285l5 2v5l-5 3-5-3v-5z" fill="#ccc"/><rect x="1030" y="285" width="4" height="4" fill="#ccc"/><rect x="1030" y="291" width="4" height="4" fill="#ccc"/><rect x="1019" y="297" width="15" height="3" fill="#ccc"/>

<!-- color panel -->
<rect x="1047" y="91" width="233" height="111" fill="#353535"/>
<rect x="1047" y="91" width="233" height="17" fill="#272727"/>
<rect x="1047" y="91" width="38" height="17" fill="#353535"/>
<rect x="1085" y="91" width="57" height="17" fill="#2d2d2d"/>
<text class="t" x="1054" y="103">Color</text><text class="ti" x="1092" y="103">Swatches</text>
<g fill="#bbb"><path d="M1262 98h4l-2 2.500z"/><rect x="1267" y="96" width="8" height="1"/><rect x="1267" y="98" width="8" height="1"/><rect x="1267" y="100" width="8" height="1"/><rect x="1267" y="102" width="8" height="1"/></g>
<rect x="1063.500" y="127.500" width="17" height="17" fill="#54cde8" stroke="#fff"/>
<rect x="1053.500" y="117.500" width="18" height="18" fill="#000" stroke="#fff"/>
<text class="t" x="1089" y="127">R</text><text class="t" x="1089" y="150">G</text><text class="t" x="1089" y="173">B</text>
<rect x="1102.500" y="115.500" width="108" height="6" fill="url(#rs)" stroke="#777"/>
<rect x="1102.500" y="138.500" width="108" height="6" fill="url(#gs)" stroke="#777"/>
<rect x="1102.500" y="161.500" width="108" height="6" fill="url(#bs)" stroke="#777"/>
<path d="M1104 122l4.500 5v2h-9v-2z" fill="#8c8c8c"/><path d="M1104 145l4.500 5v2h-9v-2z" fill="#8c8c8c"/><path d="M1104 168l4.500 5v2h-9v-2z" fill="#8c8c8c"/>
<rect x="1217" y="115" width="32" height="17" fill="#262626"/><rect x="1217" y="138" width="32" height="17" fill="#262626"/><rect x="1217" y="161" width="32" height="17" fill="#262626"/>
<text class="o" x="1221" y="127" style="fill:#d4d4d4">2</text><text class="o" x="1221" y="150" style="fill:#d4d4d4">2</text><text class="o" x="1221" y="173" style="fill:#d4d4d4">2</text>
<rect x="1051" y="186" width="205" height="15" fill="url(#hue)"/><rect x="1051" y="186" width="205" height="15" fill="url(#shade)"/>
<rect x="1255" y="186" width="8" height="7.500" fill="#fff"/><rect x="1255" y="193.500" width="8" height="7.500" fill="#000"/>

<!-- adjustments -->
<rect x="1047" y="207" width="233" height="118" fill="#353535"/>
<rect x="1047" y="207" width="233" height="17" fill="#272727"/>
<rect x="1048" y="207" width="71" height="17" fill="#353535"/>
<rect x="1119" y="207" width="40" height="17" fill="#2d2d2d"/>
<text class="t" x="1054" y="219">Adjustments</text><text class="ti" x="1125" y="219">Styles</text>
<g fill="#bbb"><path d="M1262 214h4l-2 2.500z"/><rect x="1267" y="212" width="8" height="1"/><rect x="1267" y="214" width="8" height="1"/><rect x="1267" y="216" width="8" height="1"/><rect x="1267" y="218" width="8" height="1"/></g>
<text x="1055" y="239" style="font-size:10px;font-weight:bold;fill:#cfcfcf">Add an adjustment</text>
<circle cx="1101" cy="255" r="5" fill="#bbb"/><path d="M1101 246v3M1101 261v3M1092 255h3M1107 255h3M1095 249l2 2M1105 259l2 2M1107 249l-2 2M1097 259l-2 2" stroke="#ccc" stroke-width="1.300"/>
<path d="M1118 259v-6h1.500v-3h1.500v3h1.500v-4h1.500v4h1.500v-2h1.500v-2h1.500v3h1.500v3h1.500v-2h1.500v6z" fill="#c0c0c0"/><rect x="1117" y="258" width="18" height="2" fill="#c0c0c0"/>
<rect x="1142.500" y="248.500" width="15" height="13" fill="none" stroke="#aaa"/><path d="M1142 254h16M1142 258h16M1147 248v14M1152 248v14" stroke="#777"/><path d="M1143 261c6 0 8-12 14-13" stroke="#ddd" fill="none" stroke-width="1.300"/>
<rect x="1166" y="248" width="16" height="13" fill="#ccc"/><path d="M1166 261l16-13v13z" fill="#333"/><path d="M1168 252h5M1170.500 249.500v5" stroke="#222"/><path d="M1175 257.500h5" stroke="#ddd"/>
<path d="M1191 248h16l-8 14z" fill="#aaa"/><path d="M1195 251h8l-4 7z" fill="#555"/>
<rect x="1082" y="275" width="16" height="13" fill="#ccc"/><rect x="1082" y="281" width="16" height="7" fill="url(#ggrad)"/><path d="M1085 275v6M1088 275v6M1091 275v6M1094 275v6" stroke="#444"/>
<path d="M1113.500 274v14M1107 277h13M1110 277l-3 7h6zM1117 277l-3 7h6z" stroke="#c4c4c4" fill="none"/><rect x="1105" y="284" width="8" height="2" fill="#bbb"/><rect x="1114" y="284" width="8" height="2" fill="#bbb"/>
<rect x="1130.500" y="275.500" width="16" height="12" fill="#ddd" stroke="#aaa"/><rect x="1131" y="276" width="7" height="11" fill="#222"/>
<rect x="1153" y="275" width="11" height="9" fill="#aaa"/><circle cx="1158" cy="279" r="2" fill="#444"/><circle cx="1164" cy="284" r="5" fill="#888" stroke="#ccc"/>
<circle cx="1186" cy="278" r="4.500" fill="#ccc"/><circle cx="1182" cy="285" r="4.500" fill="#ddd"/><circle cx="1190" cy="285" r="4.500" fill="#aaa"/>
<rect x="1202.500" y="275.500" width="16" height="12" fill="none" stroke="#999"/><path d="M1202 279.500h16M1202 283.500h16M1208 275v12M1213 275v12" stroke="#999"/>
<rect x="1094.500" y="302.500" width="15" height="13" fill="#333" stroke="#ccc"/><path d="M1097 313c2-5 6-8 10-9-1 5-4 9-9 9z" fill="#bbb"/>
<rect x="1118" y="302" width="16" height="14" fill="#999"/><path d="M1118 314l16-11M1119 309l10-7" stroke="#ddd" stroke-width="2"/>
<rect x="1142" y="302" width="16" height="14" fill="#222"/><path d="M1142 313h5l3-5h3l2-3h3v-3h-4l-3 3h-3l-2 4h-4z" fill="#ddd"/><path d="M1142 316h16v-6h-3l-2 3h-3l-3 3z" fill="#ccc"/>
<rect x="1166" y="302" width="16" height="14" fill="#aaa"/><path d="M1166 302l16 14v-14l-16 14z" fill="#444"/>
<rect x="1190" y="302" width="16" height="14" fill="url(#ggrad)" stroke="#aaa" stroke-width=".6"/>

<!-- layers panel -->
<rect x="1047" y="328" width="233" height="469" fill="#353535"/>
<rect x="1047" y="328" width="233" height="17" fill="#272727"/>
<rect x="1048" y="328" width="42" height="17" fill="#353535"/>
<rect x="1090" y="328" width="38" height="17" fill="#2d2d2d"/><rect x="1129" y="328" width="56" height="17" fill="#2d2d2d"/>
<text class="t" x="1054" y="340">Layers</text><text class="ti" x="1096" y="340">Paths</text><text class="ti" x="1136" y="340">Channels</text>
<g fill="#bbb"><path d="M1262 335h4l-2 2.500z"/><rect x="1267" y="333" width="8" height="1"/><rect x="1267" y="335" width="8" height="1"/><rect x="1267" y="337" width="8" height="1"/><rect x="1267" y="339" width="8" height="1"/></g>
<rect x="1052" y="351" width="80" height="16" rx="2" fill="url(#btn)" stroke="#222"/>
<circle cx="1066" cy="358" r="3.300" fill="none" stroke="#ccc" stroke-width="1.200"/><path d="M1063.500 360.500l-3 3.500" stroke="#ccc" stroke-width="1.400"/>
<text x="1072" y="362" style="font-size:10px;fill:#d0d0d0">Kind</text>
<path d="M1123 357l2-2.500 2 2.500zM1123 360l2 2.500 2-2.500z" fill="#ccc"/>
<rect x="1144.500" y="353.500" width="12" height="10" fill="#333" stroke="#bbb"/><path d="M1146 362l3-3 2 2 2-3 2 4z" fill="#bbb"/><rect x="1152" y="355" width="2" height="2" fill="#bbb"/>
<circle cx="1174" cy="358" r="5" fill="#444" stroke="#bbb"/><path d="M1170 361l7-7 1 3-5 5z" fill="#ccc"/>
<text x="1198" y="363" text-anchor="middle" style="font-family:'Liberation Serif',serif;font-size:13px;fill:#c4c4c4">T</text>
<rect x="1218.500" y="354.500" width="8" height="8" fill="none" stroke="#bbb"/><path d="M1217 353h3v3h-3zM1225 353h3v3h-3zM1217 361h3v3h-3zM1225 361h3v3h-3z" fill="#bbb"/>
<path d="M1243 353h4l3 3v8h-7z" fill="none" stroke="#bbb"/><rect x="1241" y="358" width="6" height="6" fill="#bbb"/>
<rect x="1266" y="350" width="9" height="18" fill="#2a2a2a"/><rect x="1267" y="351" width="7" height="8" fill="#666"/>
<rect x="1047" y="372" width="233" height="1" fill="#232323"/>
<rect x="1160" y="378" width="23" height="17" rx="2" fill="#222"/><path d="M1176 384l2-2.500 2 2.500zM1176 388l2 2.500 2-2.500z" fill="#ccc"/>
<text class="o" x="1188" y="391" style="fill:#c8c8c8;font-size:10px">Opacity:</text>
<rect x="1227" y="378" width="33" height="17" fill="#262626"/><rect x="1260" y="378" width="14" height="17" fill="#4a4a4a"/>
<text class="o" x="1231" y="391" style="fill:#d4d4d4;font-size:10px">100%</text><path d="M1264 386h6l-3 2z" fill="#ddd"/>
<rect x="1047" y="400" width="233" height="1" fill="#2b2b2b"/>
<text class="o" x="1208" y="418" style="fill:#c8c8c8;font-size:10px">Fill:</text>
<rect x="1227" y="407" width="33" height="17" fill="#262626"/><rect x="1260" y="407" width="14" height="17" fill="#4a4a4a"/>
<text class="o" x="1231" y="419" style="fill:#d4d4d4;font-size:10px">100%</text><path d="M1264 415h6l-3 2z" fill="#ddd"/>
<rect x="1047" y="431" width="217" height="61" fill="#4c5165"/>
<rect x="1047" y="492" width="217" height="66" fill="#373737"/><rect x="1047" y="558" width="217" height="1" fill="#242424"/>
<rect x="1047" y="559" width="217" height="218" fill="#2f2f2f"/>
<rect x="1264" y="431" width="12" height="346" fill="#2a2a2a"/>
<text x="1176" y="466" style="font-size:10px;fill:#d6d6d6">ayer 2</text>
<text x="1172" y="528" style="font-size:10px;fill:#d6d6d6;font-style:italic">ackground</text>
<rect x="1237" y="522" width="10" height="8" fill="none" stroke="#bbb" stroke-width="1.300"/><path d="M1239 522v-2.500a3 3 0 0 1 6 0V522" fill="none" stroke="#bbb" stroke-width="1.300"/><rect x="1241" y="524.500" width="2" height="2.500" fill="#bbb"/>
<rect x="1047" y="777" width="233" height="1" fill="#222"/>
<path d="M1186 783h5l2 2h7v11h-14z" fill="#c0c0c0"/>
<path d="M1213 782h10v14h-13v-9h3z" fill="#c0c0c0"/>
<path d="M1240 785h11M1243 785v-2h5v2M1241 787h9l-1 9h-7z" fill="#c0c0c0" stroke="#c0c0c0" stroke-width=".8"/>
<rect x="1005" y="797" width="275" height="3" fill="#0c1c28"/>

<!-- blend mode menu -->
<rect x="1040" y="375" width="135" height="415" rx="7" fill="#f4f4f4"/>
<rect x="1040" y="571" width="135" height="13" fill="#3a78e0"/>
<g stroke="#dcdcdc"><path d="M1040 411.500h135M1040 488.500h135M1040 565.500h135M1040 668.500h135M1040 732.500h135"/></g>
<text x="1045" y="389" style="font-size:10px;fill:#111;font-weight:bold">✓</text>
<g clip-path="url(#menuclip)">
<text class="i" x="1061" y="389">Normal</text><text class="i" x="1061" y="402">Dissolve</text>
<text class="i" x="1061" y="427">Darken</text><text class="i" x="1061" y="440">Multiply</text><text class="i" x="1061" y="453">Color Burn</text><text class="i" x="1061" y="466">Linear Burn</text><text class="i" x="1061" y="479">Darker Color</text>
<text class="i" x="1061" y="504">Lighten</text><text class="i" x="1061" y="517">Screen</text><text class="i" x="1061" y="530">Color Dodge</text><text class="i" x="1061" y="543">Linear Dodge (Add)</text><text class="i" x="1061" y="556">Lighter Color</text>
<text class="i" x="1061" y="581" style="fill:#fff">Overlay</text><text class="i" x="1061" y="594">Soft Light</text><text class="i" x="1061" y="607">Hard Light</text><text class="i" x="1061" y="620">Vivid Light</text><text class="i" x="1061" y="633">Linear Light</text><text class="i" x="1061" y="646">Pin Light</text><text class="i" x="1061" y="659">Hard Mix</text>
<text class="i" x="1061" y="684">Difference</text><text class="i" x="1061" y="697">Exclusion</text><text class="i" x="1061" y="710">Subtract</text><text class="i" x="1061" y="723">Divide</text>
<text class="i" x="1061" y="748">Hue</text><text class="i" x="1061" y="761">Saturation</text><text class="i" x="1061" y="774">Color</text>
</g>
<path d="M1102 776h10l-5 7.500z" fill="#222"/>
</svg>
</body></html>
